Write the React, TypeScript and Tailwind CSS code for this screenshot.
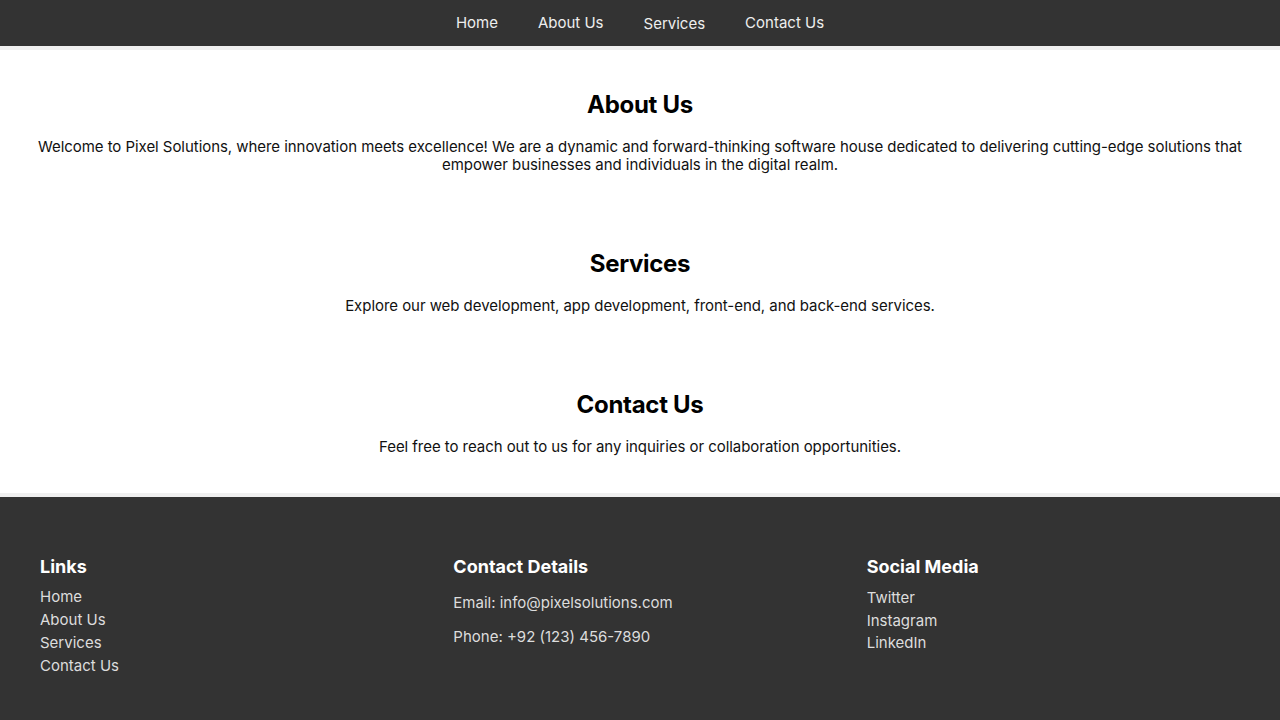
import React from "react";

const font = { fontFamily: "Inter, 'Noto Sans', sans-serif" };

function Section({ title, children }: { title: string; children: React.ReactNode }) {
  return (
    <section className="p-5 text-center">
      <h2 className="text-[24px] leading-[29px] font-bold tracking-[-0.3px] mt-5 mb-[19px] text-black">{title}</h2>
      <p className="text-[15px] leading-[18px] tracking-[-0.05px] mb-[15px] text-[#111]">{children}</p>
    </section>
  );
}

export default function App() {
  return (
    <div className="min-h-screen bg-[#f0f0f0]" style={font}>
      {/* top nav */}
      <nav className="h-[46px] bg-[#333] flex items-center justify-center text-[15px] text-[#eee]">
        <a className="px-5">Home</a>
        <a className="px-5">About Us</a>
        <a className="px-5 translate-y-[1px]">Services</a>
        <a className="px-5">Contact Us</a>
      </nav>

      <main className="bg-white mt-1 mb-1 pb-[2px]">
        <Section title="About Us">
          Welcome to Pixel Solutions, where innovation meets excellence! We are a dynamic and
          forward-thinking software house dedicated to delivering cutting-edge solutions that
          empower businesses and individuals in the digital realm.
        </Section>
        <Section title="Services">
          Explore our web development, app development, front-end, and back-end services.
        </Section>
        <Section title="Contact Us">
          Feel free to reach out to us for any inquiries or collaboration opportunities.
        </Section>
      </main>

      {/* footer */}
      <footer className="bg-[#333] px-5 pt-5 pb-7 flex text-[#ddd]">
        <div className="flex-1 p-5">
          <h3 className="text-[18px] leading-[22px] font-bold text-white mt-[19px] mb-[7px]">Links</h3>
          <ul className="text-[15px] leading-[23px]">
            <li>Home</li>
            <li>About Us</li>
            <li>Services</li>
            <li>Contact Us</li>
          </ul>
        </div>
        <div className="flex-1 p-5">
          <h3 className="text-[18px] leading-[22px] font-bold text-white mt-[19px] mb-4">Contact Details</h3>
          <p className="text-[15px] leading-[18px] mb-4">Email: info@pixelsolutions.com</p>
          <p className="text-[15px] leading-[18px]">Phone: +92 (123) 456-7890</p>
        </div>
        <div className="flex-1 p-5">
          <h3 className="text-[18px] leading-[22px] font-bold text-white mt-[19px] mb-2">Social Media</h3>
          <ul className="text-[15px] leading-[22.5px] pt-px">
            <li>Twitter</li>
            <li>Instagram</li>
            <li>LinkedIn</li>
          </ul>
        </div>
      </footer>
    </div>
  );
}
